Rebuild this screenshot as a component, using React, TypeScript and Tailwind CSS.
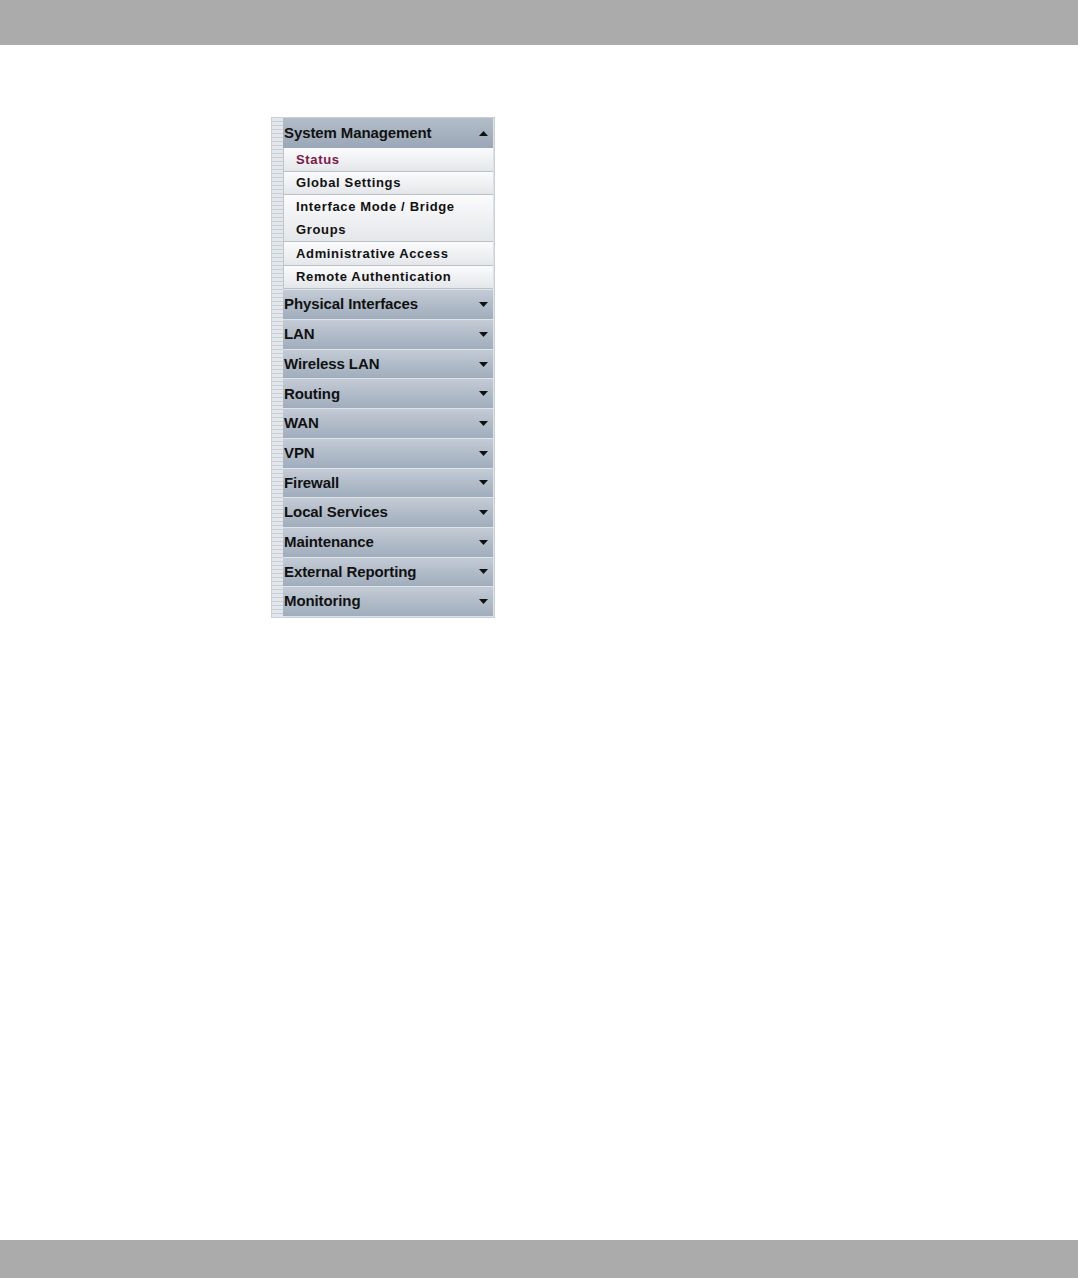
const sections = [
  "Physical Interfaces",
  "LAN",
  "Wireless LAN",
  "Routing",
  "WAN",
  "VPN",
  "Firewall",
  "Local Services",
  "Maintenance",
  "External Reporting",
  "Monitoring",
];

function Arrow({ up }: { up?: boolean }) {
  return (
    <svg width="9" height="5" viewBox="0 0 9 5" className="shrink-0">
      {up ? <path d="M0 5 L4.5 0 L9 5 Z" fill="#111" /> : <path d="M0 0 L9 0 L4.5 5 Z" fill="#111" />}
    </svg>
  );
}

function Header({ label }: { label: string }) {
  return (
    <div className="flex h-[29.7px] items-center justify-between border-t border-[#dfe4ea] bg-gradient-to-b from-[#c3cbd5] to-[#a0adbc] pl-[1px] pr-[5px]">
      <span className="text-[15px] font-bold tracking-[-0.1px] text-[#111]">{label}</span>
      <Arrow />
    </div>
  );
}

function Item({ label, active, tall }: { label: string; active?: boolean; tall?: boolean }) {
  return (
    <div
      className={`flex border-b border-[#b9c0c8] bg-gradient-to-b from-[#fbfbfc] to-[#e4e7ea] pl-[12px] ${
        tall ? "h-[47px] flex-col justify-center gap-[6px] leading-[17px]" : "h-[23.6px] items-center"
      }`}
    >
      {tall ? (
        <>
          <span className="text-[13px] font-bold tracking-[0.65px] text-[#111]">Interface Mode / Bridge</span>
          <span className="text-[13px] font-bold tracking-[0.65px] text-[#111]">Groups</span>
        </>
      ) : (
        <span className={`text-[13px] font-bold tracking-[0.65px] ${active ? "text-[#7b1747]" : "text-[#111]"}`}>
          {label}
        </span>
      )}
    </div>
  );
}

export default function App() {
  return (
    <div
      className="flex min-h-[1278px] flex-col bg-white"
      style={{ fontFamily: '"Liberation Sans", Arial, sans-serif' }}
    >
      <div className="h-[45px] bg-[#ababab]" />
      <div className="flex-1 pl-[271px] pt-[72px]">
        <div className="flex w-[224px] border border-[#c9d0d8] bg-[#dde2e8]">
          <div className="w-[11px] shrink-0 bg-[repeating-linear-gradient(to_bottom,#e3e7ec_0px,#e3e7ec_3px,#c8ced6_3px,#c8ced6_4px)]" />
          <div className="flex flex-1 flex-col pb-[1px] pr-[1px]">
            <div className="flex h-[30px] items-center justify-between bg-gradient-to-b from-[#b3bdc9] to-[#9aa7b6] pl-[1px] pr-[5px]">
              <span className="text-[15px] font-bold tracking-[-0.1px] text-[#111]">System Management</span>
              <Arrow up />
            </div>
            <div className="flex flex-col border-l border-[#c0c6cd]">
              <Item label="Status" active />
              <Item label="Global Settings" />
              <Item label="" tall />
              <Item label="Administrative Access" />
              <Item label="Remote Authentication" />
            </div>
            {sections.map((s) => (
              <Header key={s} label={s} />
            ))}
          </div>
        </div>
      </div>
      <div className="h-[38px] bg-[#ababab]" />
    </div>
  );
}
